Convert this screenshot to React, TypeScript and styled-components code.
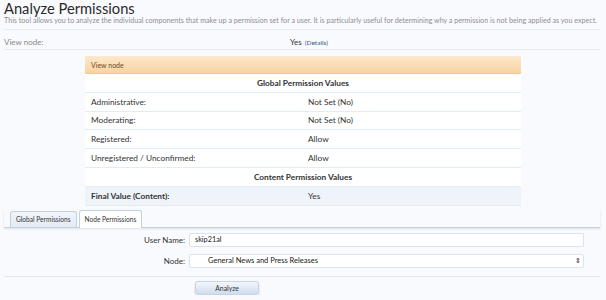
import React from "react";
import styled, { createGlobalStyle } from "styled-components";

const Global = createGlobalStyle`
  html, body { margin: 0; padding: 0; background: #f9fafd; }
  body { font-family: Lato, "Open Sans", sans-serif; color: #333; }
`;

const Page = styled.div`
  padding: 0 6px 0 4px;
`;

const Title = styled.h1`
  margin: 0;
  font-size: 14.7px;
  font-weight: normal;
  line-height: 16px;
  color: #2a2a2a;
`;

const Desc = styled.p`
  margin: 0;
  font-size: 7.15px;
  line-height: 9px;
  color: #8f8f8f;
  padding: 0 0 4px;
  border-bottom: 1px solid #e6ebf1;
  white-space: nowrap;
`;

const InfoRow = styled.div`
  display: flex;
  align-items: center;
  height: 15px;
  padding-top: 4px;
  border-bottom: 1px solid #e6ebf1;
  font-size: 8px;
`;

const InfoLabel = styled.div`
  width: 286px;
  color: #888;
`;

const InfoValue = styled.div`
  color: #333;
`;

const Small = styled.span`
  font-size: 6.5px;
  color: #34588f;
  margin-left: 3px;
`;

const TableWrap = styled.div`
  margin: 6px 0 0 81px;
  width: 436px;
`;

const TableHead = styled.div`
  height: 17px;
  display: flex;
  align-items: center;
  padding-left: 6px;
  font-size: 7px;
  color: #6d4a1c;
  background: linear-gradient(#fde9ce, #f8d3a1);
  border-bottom: 1px solid #f3cb93;
`;

const Row = styled.div<{ $hl?: boolean }>`
  display: flex;
  align-items: center;
  height: 17.8px;
  border-bottom: 1px solid #e3ebf3;
  background: ${(p) => (p.$hl ? "#eef4fa" : "#fff")};
  font-size: 8.3px;
  color: #333;
`;

const Section = styled(Row)`
  justify-content: center;
  font-weight: bold;
  background: #fff;
`;

const LabelCell = styled.div<{ $bold?: boolean }>`
  width: 217px;
  padding-left: 6px;
  font-weight: ${(p) => (p.$bold ? "bold" : "normal")};
`;

const ValueCell = styled.div`
  flex: 1;
`;

const Tabs = styled.div`
  display: flex;
  gap: 2px;
  margin-top: 4px;
  padding-left: 6px;
  border-bottom: 1px solid #c4d0de;
  box-shadow: 0 1px 2px rgba(160, 175, 200, 0.35);
  height: 17px;
  align-items: flex-end;
`;

const Tab = styled.div<{ $active?: boolean }>`
  padding: 0 5px;
  display: flex;
  align-items: center;
  font-size: 6.6px;
  color: #333;
  border: 1px solid #c4d0de;
  border-bottom: none;
  border-radius: 3px 3px 0 0;
  background: ${(p) => (p.$active ? "#fff" : "linear-gradient(#f2f6fb, #e2eaf4)")};
  margin-bottom: ${(p) => (p.$active ? "-1px" : "0")};
  height: ${(p) => (p.$active ? "17px" : "15px")};
`;

const Form = styled.div`
  padding-top: 5px;
`;

const FormRow = styled.div`
  display: flex;
  align-items: center;
  height: 14px;
  & + & { margin-top: 7px; }
`;

const FormLabel = styled.div`
  width: 181px;
  text-align: right;
  padding-right: 4px;
  font-size: 8px;
  color: #333;
`;

const Input = styled.div`
  width: 388px;
  height: 12px;
  border: 1px solid #dde3ea;
  border-radius: 2px;
  background: #fff;
  font-size: 7.3px;
  display: flex;
  align-items: center;
  padding-left: 5px;
  color: #222;
`;

const Select = styled(Input)`
  padding-left: 18px;
  width: 375px;
  font-size: 7.5px;
  justify-content: space-between;
`;

const Arrows = styled.span`
  font-size: 7px;
  width: 10px;
  text-align: center;
  line-height: 1;
`;

const Sep = styled.div`
  margin-top: 8px;
  border-bottom: 1px solid #dfeaf0;
`;

const ButtonRow = styled.div`
  padding: 4px 0 0 191px;
`;

const Button = styled.div`
  width: 62px;
  height: 12px;
  border-radius: 3px;
  background: linear-gradient(#f2f7fc, #cfdced);
  border: 1px solid #c9d4e2;
  box-shadow: 0 1px 2px rgba(120, 140, 170, 0.4);
  font-size: 6.8px;
  display: flex;
  align-items: center;
  justify-content: center;
  color: #333;
`;

const rows: [string, string][] = [
  ["Administrative:", "Not Set (No)"],
  ["Moderating:", "Not Set (No)"],
  ["Registered:", "Allow"],
  ["Unregistered / Unconfirmed:", "Allow"],
];

export default function App() {
  return (
    <Page>
      <Global />
      <Title>Analyze Permissions</Title>
      <Desc>
        This tool allows you to analyze the individual components that make up a permission set for a user. It is
        particularly useful for determining why a permission is not being applied as you expect.
      </Desc>
      <InfoRow>
        <InfoLabel>View node:</InfoLabel>
        <InfoValue>
          Yes<Small>(Details)</Small>
        </InfoValue>
      </InfoRow>
      <TableWrap>
        <TableHead>View node</TableHead>
        <Section>Global Permission Values</Section>
        {rows.map(([l, v]) => (
          <Row key={l}>
            <LabelCell>{l}</LabelCell>
            <ValueCell>{v}</ValueCell>
          </Row>
        ))}
        <Section>Content Permission Values</Section>
        <Row $hl>
          <LabelCell $bold>Final Value (Content):</LabelCell>
          <ValueCell>Yes</ValueCell>
        </Row>
      </TableWrap>
      <Tabs>
        <Tab>Global Permissions</Tab>
        <Tab $active>Node Permissions</Tab>
      </Tabs>
      <Form>
        <FormRow>
          <FormLabel>User Name:</FormLabel>
          <Input>skip21al</Input>
        </FormRow>
        <FormRow>
          <FormLabel>Node:</FormLabel>
          <Select>
            General News and Press Releases<Arrows>⇕</Arrows>
          </Select>
        </FormRow>
        <Sep />
        <ButtonRow>
          <Button>Analyze</Button>
        </ButtonRow>
      </Form>
    </Page>
  );
}
